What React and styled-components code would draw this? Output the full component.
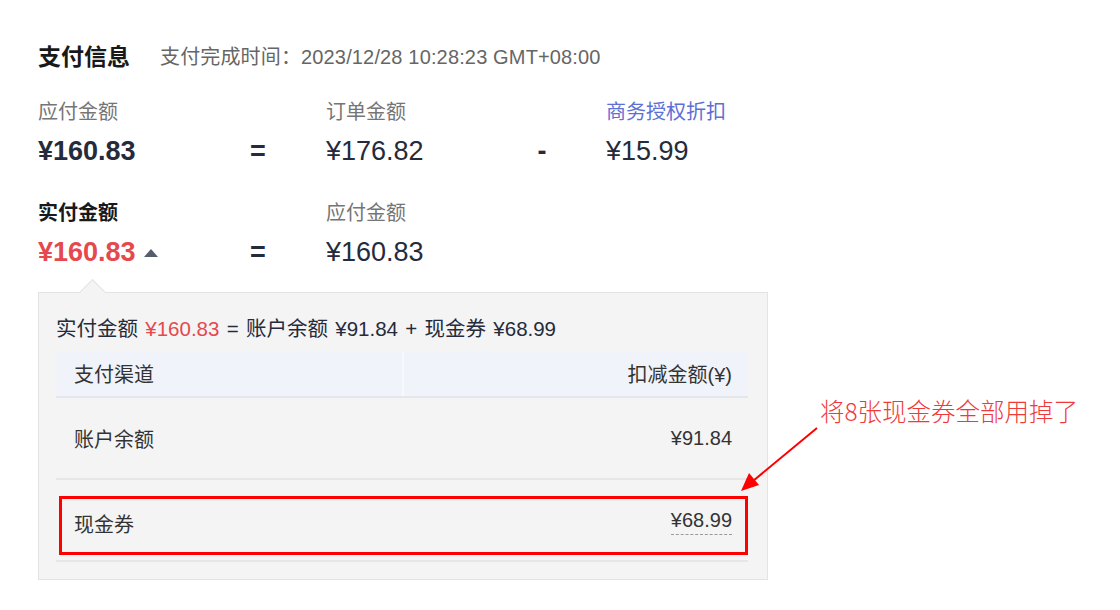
import React from "react";
import styled, { createGlobalStyle } from "styled-components";

const Global = createGlobalStyle`
  body {
    margin: 0;
    background: #fff;
    font-family: "Liberation Sans", Arial, "Noto Sans CJK SC", sans-serif;
    color: #252b3a;
  }
`;

const Page = styled.div`
  position: relative;
  width: 1120px;
  height: 610px;
  padding: 41px 0 0 38px;
  box-sizing: border-box;
  overflow: hidden;
`;

const Header = styled.div`
  display: flex;
  align-items: center;
  gap: 30px;
  height: 28px;
`;

const Title = styled.h2`
  margin: 0;
  font-size: 23px;
  font-weight: bold;
  color: #191919;
`;

const Sub = styled.span`
  font-size: 20px;
  letter-spacing: 0.15px;
  color: #666;
`;

const Row = styled.div`
  display: flex;
  margin-top: ${(p) => p.$top}px;
`;

const Cell = styled.div`
  width: ${(p) => p.$w}px;
  display: flex;
  flex-direction: column;
  gap: 12px;
`;

const Label = styled.div`
  height: 22px;
  line-height: 22px;
  font-size: 20px;
  color: ${(p) => (p.$link ? "#5e6fd6" : p.$strong ? "#191919" : "#757575")};
  font-weight: ${(p) => (p.$strong ? "bold" : "normal")};
`;

const Value = styled.div`
  height: 32px;
  line-height: 32px;
  font-size: 27px;
  display: flex;
  align-items: center;
  gap: 8px;
  color: ${(p) => (p.$red ? "#e5484d" : "#252b3a")};
  font-weight: ${(p) => (p.$bold ? "bold" : "normal")};
`;

const Op = styled.div`
  width: ${(p) => p.$w}px;
  display: flex;
  flex-direction: column;
  gap: 12px;
  span {
    display: block;
    width: 40px;
    text-align: center;
    height: 32px;
    line-height: 32px;
    font-size: 27px;
    font-weight: bold;
    color: #252b3a;
  }
`;

const Caret = styled.i`
  width: 0;
  height: 0;
  border-left: 7px solid transparent;
  border-right: 7px solid transparent;
  border-bottom: 8px solid #575d6c;
  margin-top: 2px;
`;

const Pop = styled.div`
  position: relative;
  margin-top: 24px;
  width: 730px;
  height: 288px;
  box-sizing: border-box;
  background: #f4f4f4;
  border: 1px solid #e3e3e3;
  padding: 25px 19px 19px 17px;

  &::before {
    content: "";
    position: absolute;
    top: -10px;
    left: 44px;
    width: 18px;
    height: 18px;
    background: #f4f4f4;
    border-left: 1px solid #e3e3e3;
    border-top: 1px solid #e3e3e3;
    transform: rotate(45deg);
  }
`;

const Summary = styled.div`
  height: 22px;
  line-height: 22px;
  font-size: 20.5px;
  word-spacing: 1.6px;
  color: #252b3a;
  b {
    font-weight: normal;
    color: #e5484d;
  }
`;

const Table = styled.div`
  margin-top: 11px;
`;

const THead = styled.div`
  display: grid;
  grid-template-columns: 346px 1fr;
  height: 45px;
  background: #f0f3fa;
  border-bottom: 2px solid #e4e6ed;
  font-size: 20px;
  color: #333;
  > div {
    display: flex;
    align-items: center;
    padding: 0 16px 0 18px;
  }
  > div + div {
    justify-content: flex-end;
    border-left: 2px solid #f7f9fd;
  }
`;

const TRow = styled.div`
  position: relative;
  display: flex;
  align-items: center;
  justify-content: space-between;
  height: 80px;
  padding: 0 16px 0 18px;
  border-bottom: 2px solid #e6e6e8;
  font-size: 20px;
  color: #333;
`;

const Amount = styled.span`
  border-bottom: ${(p) => (p.$dashed ? "1px dashed #9a9a9a" : "none")};
  padding-bottom: ${(p) => (p.$dashed ? "2px" : "0")};
  margin-top: ${(p) => (p.$dashed ? "3px" : "0")};
`;

const MarkBox = styled.div`
  position: absolute;
  left: 3px;
  right: 0;
  top: 16px;
  bottom: 5px;
  border: 3px solid #f00;
`;

const Note = styled.div`
  position: absolute;
  left: 820px;
  top: 393px;
  font-size: 24.5px;
  color: #f03a3a;
  font-family: "Noto Sans CJK SC", "Liberation Sans", sans-serif;
  font-weight: 300;
`;

const ArrowSvg = styled.svg`
  position: absolute;
  left: 735px;
  top: 420px;
`;

export default function App() {
  return (
    <Page>
      <Global />
      <Header>
        <Title>支付信息</Title>
        <Sub>支付完成时间：2023/12/28 10:28:23 GMT+08:00</Sub>
      </Header>

      <Row $top={32}>
        <Cell $w={200}>
          <Label>应付金额</Label>
          <Value $bold>¥160.83</Value>
        </Cell>
        <Op $w={88}>
          <Label />
          <span>=</span>
        </Op>
        <Cell $w={196}>
          <Label>订单金额</Label>
          <Value>¥176.82</Value>
        </Cell>
        <Op $w={84}>
          <Label />
          <span>-</span>
        </Op>
        <Cell $w={200}>
          <Label $link>商务授权折扣</Label>
          <Value>¥15.99</Value>
        </Cell>
      </Row>

      <Row $top={35}>
        <Cell $w={200}>
          <Label $strong>实付金额</Label>
          <Value $bold $red>
            ¥160.83
            <Caret />
          </Value>
        </Cell>
        <Op $w={88}>
          <Label />
          <span>=</span>
        </Op>
        <Cell $w={196}>
          <Label>应付金额</Label>
          <Value>¥160.83</Value>
        </Cell>
      </Row>

      <Pop>
        <Summary>
          实付金额 <b>¥160.83</b> = 账户余额 ¥91.84 + 现金券 ¥68.99
        </Summary>
        <Table>
          <THead>
            <div>支付渠道</div>
            <div>扣减金额(¥)</div>
          </THead>
          <TRow>
            <span>账户余额</span>
            <Amount>¥91.84</Amount>
          </TRow>
          <TRow>
            <MarkBox />
            <span style={{ marginTop: 6 }}>现金券</span>
            <Amount $dashed>¥68.99</Amount>
          </TRow>
        </Table>
      </Pop>

      <Note>将8张现金券全部用掉了</Note>
      <ArrowSvg width="90" height="80" viewBox="0 0 90 80">
        <line x1="82" y1="8" x2="18" y2="61" stroke="#f00" strokeWidth="2" />
        <polygon points="6,71 14,53 24,65" fill="#f00" />
      </ArrowSvg>
    </Page>
  );
}
